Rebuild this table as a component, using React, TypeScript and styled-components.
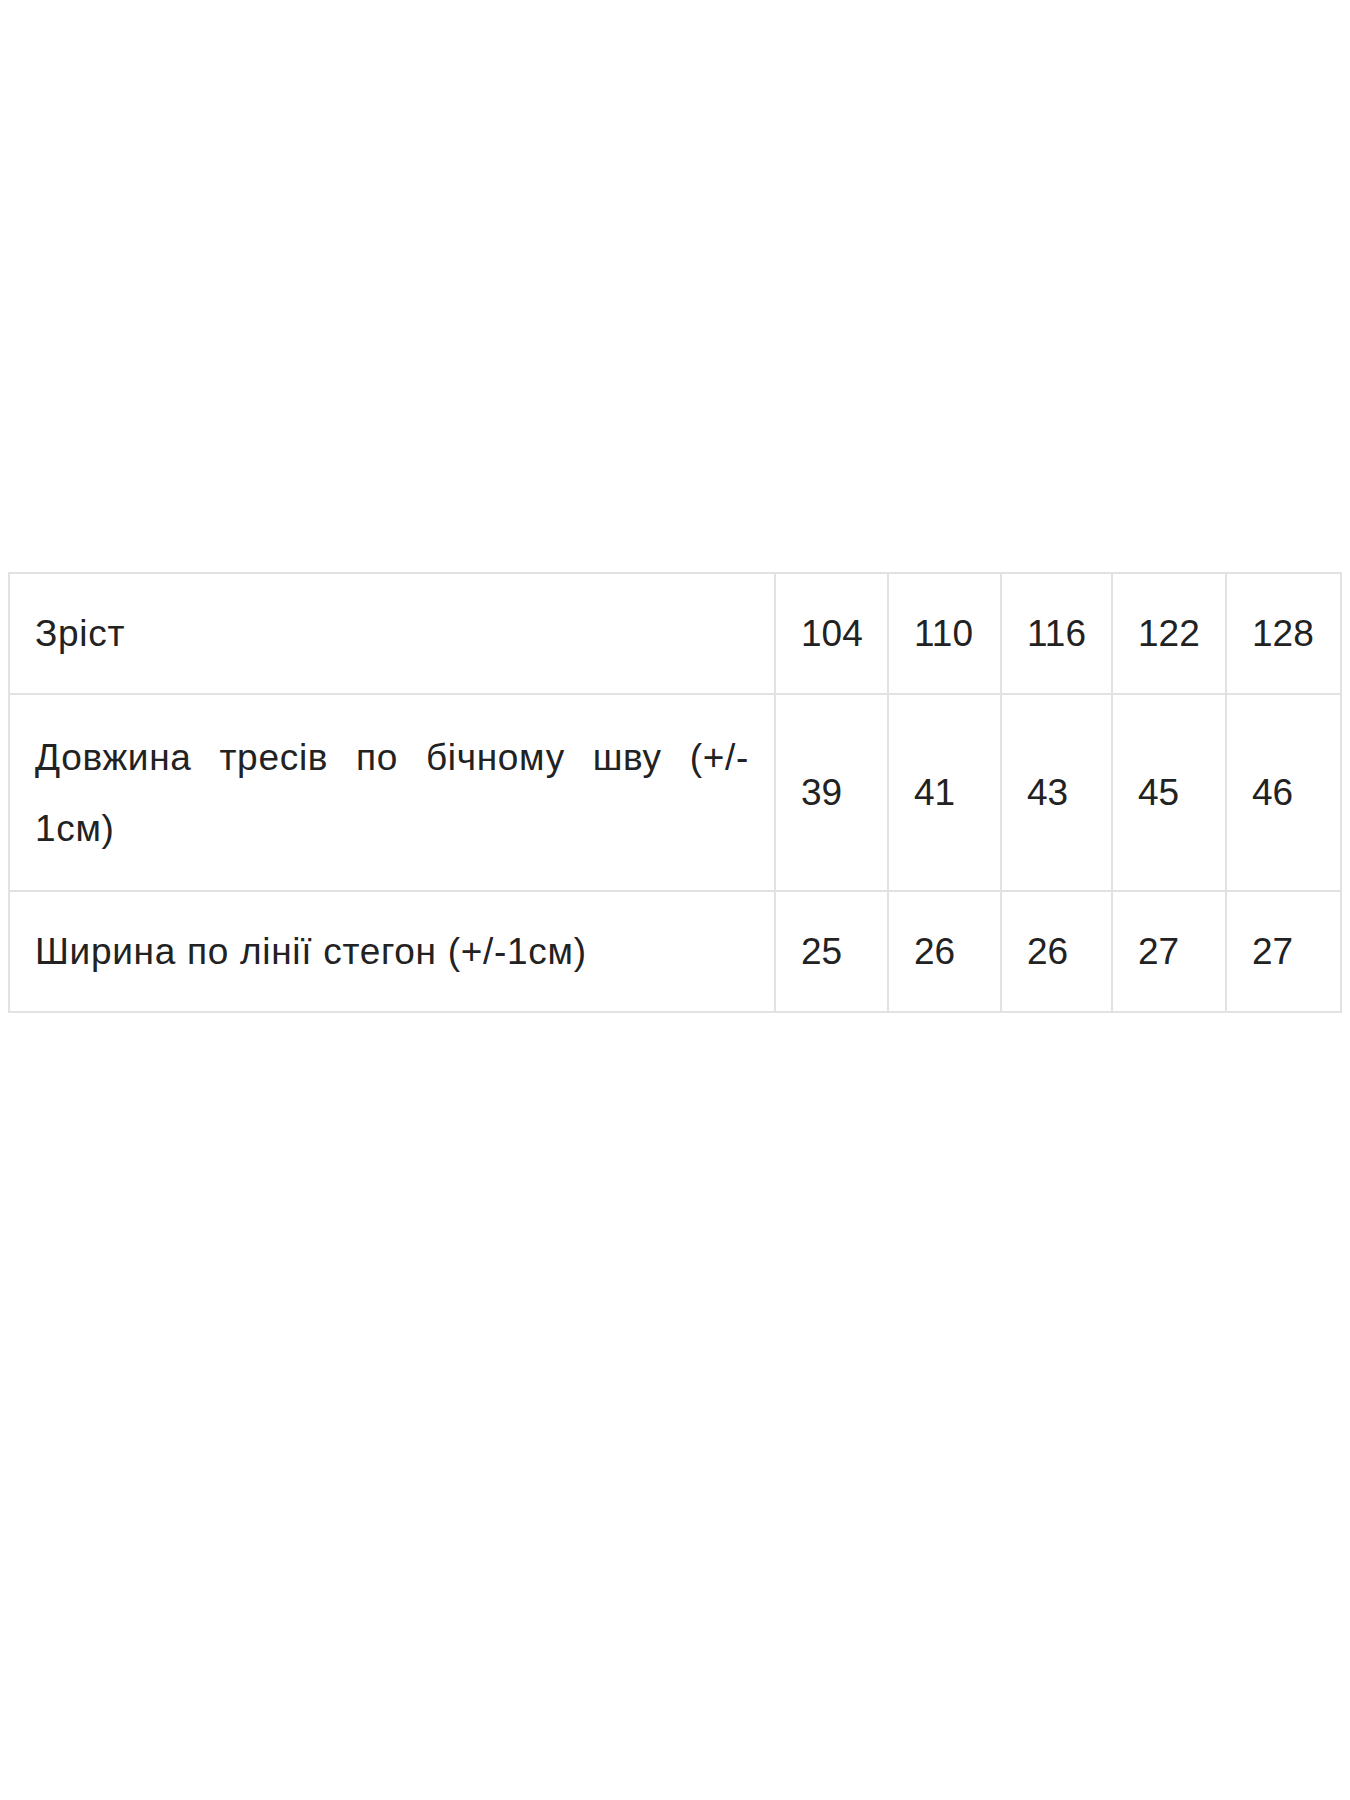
import React, { FC } from 'react';
import styled, { createGlobalStyle } from 'styled-components';

interface ISizeRow {
  label: React.ReactNode;
  values: string[];
  wrapped?: boolean;
}

const GlobalStyle = createGlobalStyle`
  html, body {
    margin: 0;
    padding: 0;
    background: #ffffff;
  }

  body {
    font-family: 'Liberation Sans', Arial, sans-serif;
    color: #222222;
  }
`;

const Page = styled.div`
  width: 1350px;
  min-height: 1800px;
  padding: 572px 0 0 8px;
  box-sizing: border-box;
`;

const Table = styled.table`
  border-collapse: collapse;
  table-layout: fixed;
  font-size: 37px;
  line-height: 71px;
`;

const Cell = styled.td`
  border: 2px solid #e2e2e2;
  padding: 24px 25px;
  vertical-align: middle;
  text-align: left;
`;

// the long label is justified and breaks after "(+/-", as in the source table
const LabelCell = styled(Cell)<{ $wrapped?: boolean }>`
  letter-spacing: 0.7px;
  padding: ${({ $wrapped }) => ($wrapped ? '27px 25px 26px' : '24px 25px')};
  text-align: ${({ $wrapped }) => ($wrapped ? 'justify' : 'left')};
  text-align-last: ${({ $wrapped }) => ($wrapped ? 'justify' : 'auto')};
`;

const columns = [766, 113, 113, 111, 114, 115];

const rows: ISizeRow[] = [
  { label: 'Зріст', values: ['104', '110', '116', '122', '128'] },
  {
    label: (
      <>
        Довжина тресів по бічному шву (+/-
        <br />
        1см)
      </>
    ),
    values: ['39', '41', '43', '45', '46'],
    wrapped: true,
  },
  {
    label: 'Ширина по лінії стегон (+/-1см)',
    values: ['25', '26', '26', '27', '27'],
  },
];

const SizeTable: FC = () => (
  <Table style={{ width: columns.reduce((sum, w) => sum + w, 0) }}>
    <colgroup>
      {columns.map((width, index) => (
        <col key={index} style={{ width }} />
      ))}
    </colgroup>
    <tbody>
      {rows.map((row, index) => (
        <tr key={index}>
          <LabelCell $wrapped={row.wrapped}>{row.label}</LabelCell>
          {row.values.map((value, i) => (
            <Cell key={i}>{value}</Cell>
          ))}
        </tr>
      ))}
    </tbody>
  </Table>
);

const App: FC = () => (
  <>
    <GlobalStyle />
    <Page>
      <SizeTable />
    </Page>
  </>
);

export default App;
